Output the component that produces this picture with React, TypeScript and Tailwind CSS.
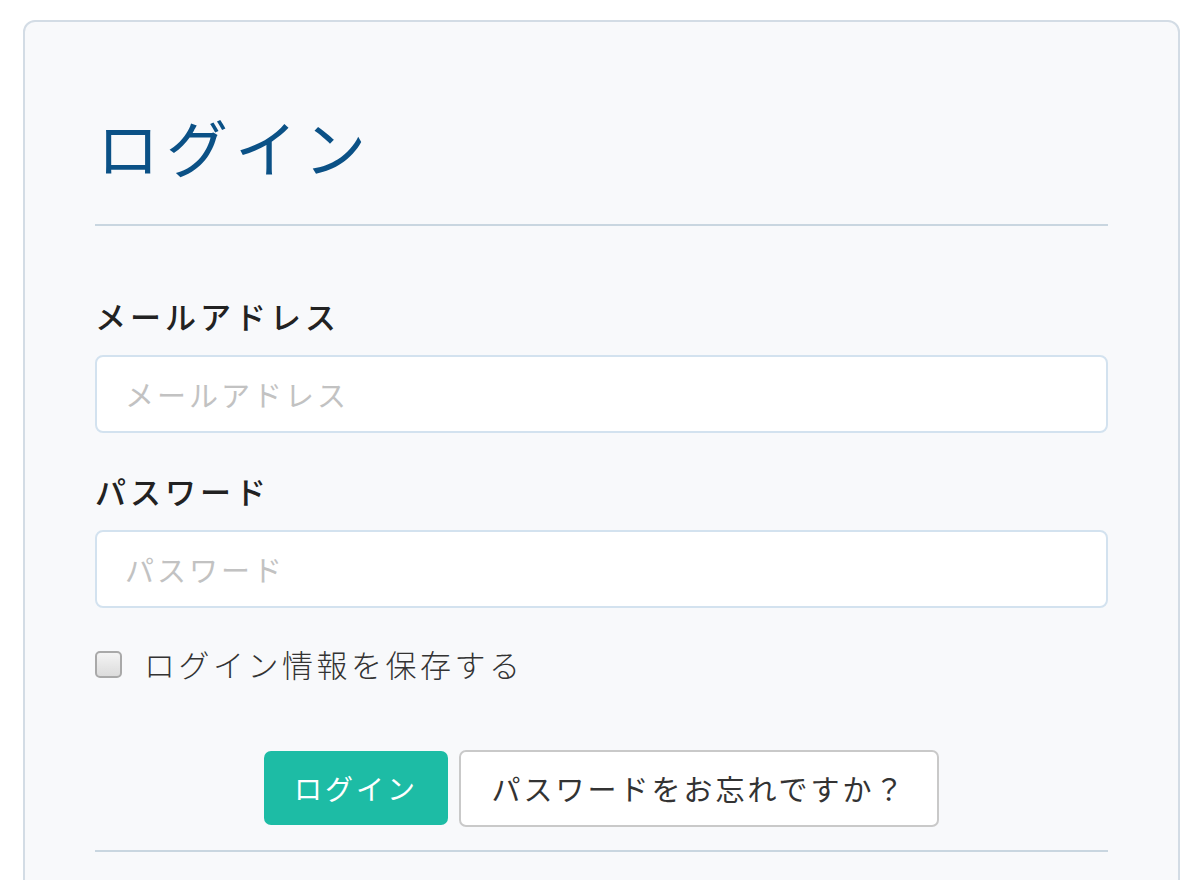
export default function App() {
  const font = { fontFamily: '"Noto Sans CJK JP", "Noto Sans", sans-serif' };

  return (
    <div className="min-h-[880px] bg-white pt-[20px] pl-[23px] pr-[20px] overflow-hidden" style={font}>
      <div className="h-[900px] rounded-[12px] border-2 border-[#d3dce5] bg-[#f8f9fb] px-[70px] pt-[86px]">
        {/* Title */}
        <h1 className="text-[62px] leading-[76px] tracking-[7px] text-[#0b5186] pl-[2px]">
          ログイン
        </h1>
        <div className="mt-[40px] h-[2px] bg-[#c9d6e0]" />

        {/* Email */}
        <div className="mt-[70px]">
          <label className="block text-[31px] leading-[40px] font-medium tracking-[4px] text-[#222]">
            メールアドレス
          </label>
          <input
            type="text"
            placeholder="メールアドレス"
            className="mt-[19px] block h-[78px] w-full rounded-[8px] border-2 border-[#d3e2ef] bg-white px-[28px] text-[29px] tracking-[3px] text-[#333] placeholder:text-[#c2c2c2] outline-none"
          />
        </div>

        {/* Password */}
        <div className="mt-[38px]">
          <label className="block text-[31px] leading-[40px] font-medium tracking-[4px] text-[#222]">
            パスワード
          </label>
          <input
            type="password"
            placeholder="パスワード"
            className="mt-[19px] block h-[78px] w-full rounded-[8px] border-2 border-[#d3e2ef] bg-white px-[28px] text-[29px] tracking-[3px] text-[#333] placeholder:text-[#c2c2c2] outline-none"
          />
        </div>

        {/* Remember */}
        <label className="mt-[36px] flex items-center gap-[22px]">
          <span className="block h-[27px] w-[27px] rounded-[5px] border-2 border-[#a9a9a9] bg-gradient-to-b from-[#f4f4f4] to-[#dcdcdc]" />
          <span className="text-[31px] leading-[40px] font-light tracking-[3.5px] text-[#333]">
            ログイン情報を保存する
          </span>
        </label>

        {/* Buttons */}
        <div className="mt-[67px] flex justify-center gap-[11px]">
          <button className="h-[74px] w-[184px] rounded-[7px] bg-[#1dbca5] text-[28px] tracking-[3px] text-white">
            ログイン
          </button>
          <button className="h-[77px] w-[480px] -mt-[1px] rounded-[7px] border-2 border-[#c9c9c9] bg-white text-[29px] tracking-[3px] text-[#333]">
            パスワードをお忘れですか？
          </button>
        </div>
        <div className="mt-[23px] h-[2px] bg-[#c9d6e0]" />
      </div>
    </div>
  );
}
